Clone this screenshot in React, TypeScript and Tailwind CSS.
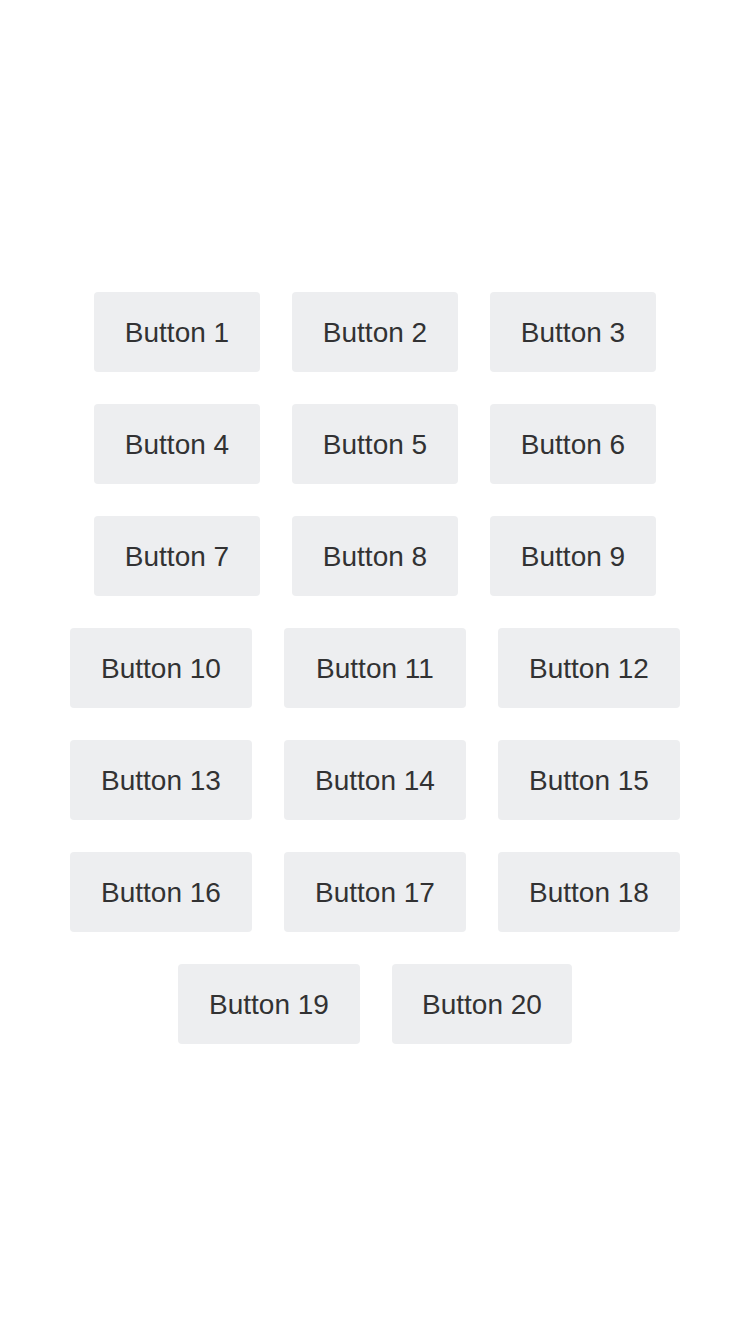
export default function App() {
  const buttons = Array.from({ length: 20 }, (_, i) => i + 1)

  const widthFor = (n: number) => {
    if (n < 10) return 'w-[166px]'
    if (n === 20) return 'w-[180px]'
    return 'w-[182px]'
  }

  return (
    <div
      className="flex min-h-screen w-full items-center justify-center bg-white pt-[2px]"
      style={{ fontFamily: '"Liberation Sans", Arial, sans-serif' }}
    >
      <div className="flex flex-wrap justify-center">
        {buttons.map((n) => (
          <button
            key={n}
            className={`m-4 h-20 ${widthFor(n)} rounded-[4px] bg-[#edeef0] pt-[2px] text-[28px] text-[#323233]`}
          >
            Button {n}
          </button>
        ))}
      </div>
    </div>
  )
}
